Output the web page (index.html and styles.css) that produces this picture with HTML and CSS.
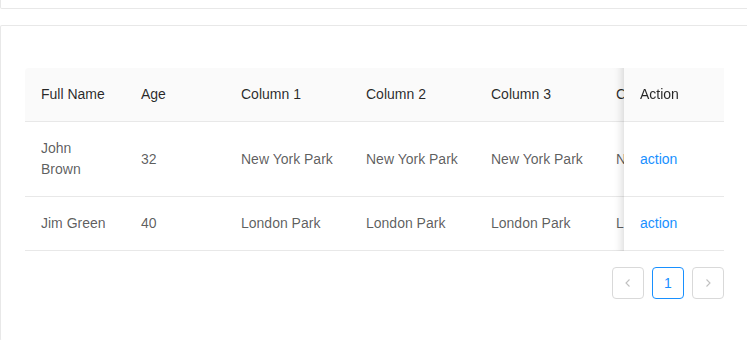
FILE: index.html
```html
<!DOCTYPE html>
<html>
<head>
<meta charset="utf-8">
<link rel="stylesheet" href="styles.css">
</head>
<body>
<div class="card card-top"></div>
<div class="card card-main">
  <div class="table-scroll">
    <table class="table">
      <colgroup>
        <col class="w100"><col class="w100"><col class="w125"><col class="w125"><col class="w125"><col class="w125"><col class="w100">
      </colgroup>
      <thead>
        <tr>
          <th>Full Name</th><th>Age</th><th>Column 1</th><th>Column 2</th><th>Column 3</th><th>Column 4</th><th class="fix-right">Action</th>
        </tr>
      </thead>
      <tbody>
        <tr>
          <td>John Brown</td><td>32</td><td>New York Park</td><td>New York Park</td><td>New York Park</td><td>New York Park</td><td class="fix-right"><a class="link">action</a></td>
        </tr>
        <tr>
          <td>Jim Green</td><td>40</td><td>London Park</td><td>London Park</td><td>London Park</td><td>London Park</td><td class="fix-right"><a class="link">action</a></td>
        </tr>
      </tbody>
    </table>
  </div>
  <ul class="pagination">
    <li class="page-item disabled">
      <svg viewBox="0 0 12 12" width="12" height="12"><path d="M7.5 2.5 L4 6 L7.5 9.5" fill="none" stroke="currentColor" stroke-width="1.1"/></svg>
    </li>
    <li class="page-item active">1</li>
    <li class="page-item disabled">
      <svg viewBox="0 0 12 12" width="12" height="12"><path d="M4.5 2.5 L8 6 L4.5 9.5" fill="none" stroke="currentColor" stroke-width="1.1"/></svg>
    </li>
  </ul>
</div>
</body>
</html>
```

FILE: styles.css
```css
html, body {
  margin: 0;
  padding: 0;
  overflow: hidden;
  background: #fff;
}
body {
  font-family: "Liberation Sans", Arial, sans-serif;
  font-size: 14px;
  line-height: 1.5;
  color: rgba(0, 0, 0, 0.65);
  width: 749px;
}
.card {
  box-sizing: border-box;
  width: 749px;
  border: 1px solid #e8e8e8;
  border-radius: 2px;
  background: #fff;
}
.card-top {
  height: 9px;
  border-top: none;
  border-radius: 0 0 2px 2px;
  margin-bottom: 16px;
}
.card-main {
  padding: 42px 24px 0 24px;
  height: 316px;
  border-bottom: none;
}
.table-scroll {
  width: 699px;
  overflow: hidden;
}
.table {
  table-layout: fixed;
  border-collapse: separate;
  border-spacing: 0;
  width: 800px;
  text-align: left;
}
.w100 { width: 100px; }
.w125 { width: 125px; }
.table th, .table td {
  padding: 16px;
  border-bottom: 1px solid #e8e8e8;
  overflow-wrap: break-word;
  vertical-align: middle;
}
.table th {
  background: #fafafa;
  color: rgba(0, 0, 0, 0.85);
  font-weight: 500;
}
.table thead th:first-child {
  border-top-left-radius: 4px;
}
.table td {
  background: #fff;
}
.fix-right {
  position: sticky;
  right: 0;
  z-index: 2;
}
.table th.fix-right {
  border-top-right-radius: 4px;
}
.fix-right::after {
  content: "";
  position: absolute;
  top: 0;
  bottom: -1px;
  left: 0;
  width: 30px;
  transform: translateX(-100%);
  box-shadow: inset -10px 0 8px -8px rgba(0, 0, 0, 0.15);
  pointer-events: none;
}
.link {
  color: #1890ff;
  text-decoration: none;
}
.pagination {
  list-style: none;
  margin: 16px 0 0 0;
  padding: 0;
  display: flex;
  justify-content: flex-end;
  gap: 8px;
  width: 699px;
}
.page-item {
  box-sizing: border-box;
  width: 32px;
  height: 32px;
  border: 1px solid #d9d9d9;
  border-radius: 4px;
  display: flex;
  align-items: center;
  justify-content: center;
  background: #fff;
  line-height: 30px;
}
.page-item.disabled {
  color: rgba(0, 0, 0, 0.25);
}
.page-item.active {
  border-color: #1890ff;
  color: #1890ff;
}
```
